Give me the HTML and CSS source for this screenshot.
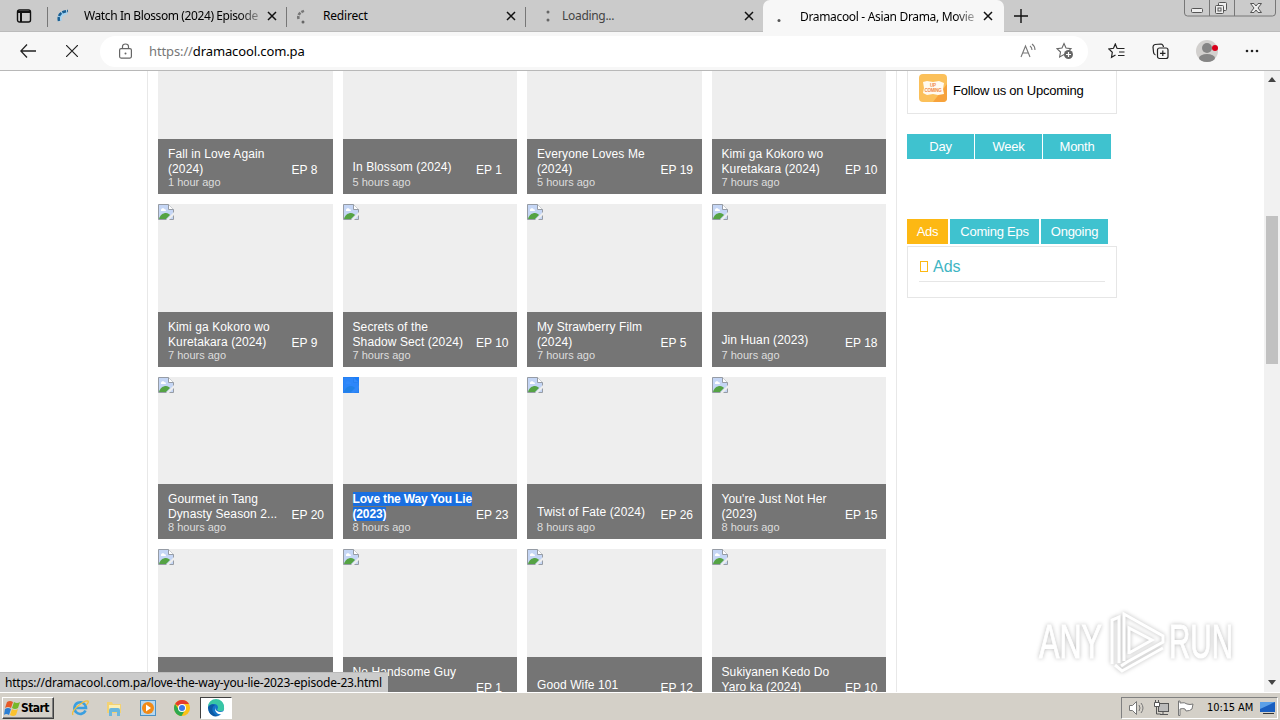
FILE: index.html
```
<!DOCTYPE html>
<html lang="en">
<head>
  <meta charset="UTF-8">
  <title>Dramacool - Asian Drama, Movies</title>
  <link rel="stylesheet" href="styles.css">
</head>
<body>

<!-- shared icons -->
<svg class="defs" width="0" height="0">
  <symbol id="broken" viewBox="0 0 16 16">
    <path d="M.5.5h10l5 5v10H.5z" fill="#c5d6f5" stroke="#969ca5"/>
    <path d="M10.5.5v5h5" fill="#fff" stroke="#969ca5"/>
    <path d="M3 6c0-2 3-2.500 3.500-.8C8 5 8.500 6.500 7.500 7H3z" fill="#fff"/>
    <path d="M1 15c1-4 4-6 7-6 2 0 3 1 4 2l-4 4z" fill="#55a344"/>
    <path d="M8 16l8-8v3l-5 5z" fill="#eee"/>
  </symbol>
  <symbol id="close" viewBox="0 0 10 10"><path d="M1 1l8 8M9 1L1 9" stroke="#111" stroke-width="1.5"/></symbol>
</svg>

<div class="tabs">
  <div class="tab-menu">
    <svg width="16" height="16" viewBox="0 0 16 16"><rect x="1.500" y="2" width="13" height="12" rx="2" fill="none" stroke="#111" stroke-width="1.400"/><path d="M1.500 4h13M5 3v11" stroke="#111" stroke-width="2"/></svg>
  </div>
  <div class="tab first">
    <svg class="spin" width="16" height="16" viewBox="0 0 16 16"><path d="M6 13Q4 6 13 4" fill="none" stroke="#a6d3f0" stroke-width="4"/><path d="M5 13Q3 4 14 3" fill="none" stroke="#1a5f92" stroke-width="2.500" stroke-dasharray="4 1"/></svg>
    <span class="tab-name fade">Watch In Blossom (2024) Episode</span>
    <svg class="x" width="10" height="10"><use href="#close"/></svg>
  </div>
  <div class="tab second">
    <svg class="spin" width="16" height="16" viewBox="0 0 16 16"><path d="M3.500 11Q2 5 10 2.500" fill="none" stroke="#777" stroke-width="2.600" stroke-dasharray="3 1"/><circle cx="8" cy="14" r="1.500" fill="#666"/></svg>
    <span class="tab-name">Redirect</span>
    <svg class="x" width="10" height="10"><use href="#close"/></svg>
  </div>
  <div class="tab third">
    <svg class="spin" width="16" height="16" viewBox="0 0 16 16"><circle cx="10" cy="4" r="1.500" fill="#666"/><circle cx="10" cy="12" r="1.500" fill="#666"/></svg>
    <span class="tab-name grey">Loading...</span>
    <svg class="x" width="10" height="10"><use href="#close"/></svg>
  </div>
  <div class="tab active">
    <svg class="spin" width="16" height="16" viewBox="0 0 16 16"><circle cx="4" cy="12.500" r="1.500" fill="#555"/></svg>
    <span class="tab-name fade">Dramacool - Asian Drama, Movie</span>
    <svg class="x" width="10" height="10"><use href="#close"/></svg>
  </div>
  <svg class="plus" width="14" height="14" viewBox="0 0 14 14"><path d="M7 0v14M0 7h14" stroke="#111" stroke-width="1.400"/></svg>
  <div class="win-buttons">
    <svg width="92" height="17" viewBox="0 0 92 17" fill="none" stroke="#777">
      <path d="M.5 0v13q0 3 3 3h85q3 0 3-3V0M25.500 0v16M50.500 0v16"/>
      <g stroke="#555" fill="#eee">
        <rect x="7.500" y="8.500" width="11" height="4" rx="1"/>
        <rect x="34.500" y="2.500" width="8" height="8" rx="1"/><rect x="31.500" y="5.500" width="8" height="8" rx="1"/><rect x="34" y="8" width="3" height="3"/>
        <path d="M66.500 3.500h3.500l2 2.500 2-2.500h3.500l-3.500 4.500 3.500 4.500H74l-2-2.500-2 2.500h-3.500L70 8z"/>
      </g>
    </svg>
  </div>
</div>

<div class="toolbar">
  <svg class="back" width="16" height="14" viewBox="0 0 16 14"><path d="M7 .5L.8 7 7 13.500M1 7h15" fill="none" stroke="#222" stroke-width="1.300"/></svg>
  <svg class="stop" width="12" height="12" viewBox="0 0 12 12"><path d="M0 0l12 12M12 0L0 12" stroke="#222" stroke-width="1.200"/></svg>
  <div class="address">
    <svg class="lock" width="13" height="16" viewBox="0 0 13 16" fill="none" stroke="#666" stroke-width="1.200"><rect x=".6" y="5.600" width="11.800" height="9.500" rx="1.500"/><path d="M3.500 5.500V3.500Q3.500 1 6.500 1t3 2.500v2"/><circle cx="6.500" cy="10.500" r="1" fill="#666" stroke="none"/></svg>
    <span class="url"><i>https://</i>dramacool.com.pa</span>
    <svg class="read" width="16" height="16" viewBox="0 0 16 16" fill="none" stroke="#777" stroke-width="1.100"><path d="M1 14L5.500 3 10 14M2.500 10h6M10 3q2 1.500 2 4M12 1q3 2 3 6"/></svg>
    <svg class="fav" width="18" height="18" viewBox="0 0 18 18"><path d="M8 1.500l2 4.500 5 .6-3.700 3.400 1 5L8 12.600 3.600 15l.9-5L1 6.600 6 6z" fill="none" stroke="#666" stroke-width="1.100"/><circle cx="12.500" cy="12.500" r="4.500" fill="#666"/><path d="M12.500 10v5M10 12.500h5" stroke="#fff" stroke-width="1.200"/></svg>
  </div>
  <div class="tools">
    <svg width="17" height="16" viewBox="0 0 17 16" fill="none" stroke="#222" stroke-width="1.200"><path d="M10 5.500L9 5.300 7.300 1 5.500 5.300.8 6l3.500 3.300-.8 5L7.500 12M9 5.500h7.500M11 9h5.500M10 12.500h6.500"/></svg>
    <svg width="17" height="17" viewBox="0 0 17 17" fill="none" stroke="#222" stroke-width="1.200"><path d="M3.500 12Q1.500 11.500 1.500 9L1 4q0-2 2-2.500L9 1q2 0 2.500 3"/><rect x="5.500" y="5" width="10.500" height="10.500" rx="2"/><path d="M10.800 7.500v5.500M8 10.300h5.500"/></svg>
    <svg class="avatar" width="24" height="22" viewBox="0 0 24 22"><circle cx="11" cy="11" r="11" fill="#d2d0ce"/><circle cx="11" cy="8" r="5" fill="#858585"/><ellipse cx="11" cy="18" rx="8" ry="4" fill="#858585"/><circle cx="19" cy="8" r="3" fill="#d9001b"/></svg>
    <svg width="14" height="4" viewBox="0 0 14 4" fill="#222"><circle cx="2" cy="2" r="1.300"/><circle cx="7" cy="2" r="1.300"/><circle cx="12" cy="2" r="1.300"/></svg>
  </div>
</div>

<div class="viewport">
  <div class="page">
    <div class="left">
      <ul class="list">
        <li><div class="info two"><h3>Fall in Love Again (2024)</h3><span class="time">1 hour ago</span><span class="ep">EP 8</span></div></li>
        <li><div class="info"><h3>In Blossom (2024)</h3><span class="time">5 hours ago</span><span class="ep">EP 1</span></div></li>
        <li><div class="info two"><h3>Everyone Loves Me (2024)</h3><span class="time">5 hours ago</span><span class="ep">EP 19</span></div></li>
        <li><div class="info two"><h3>Kimi ga Kokoro wo Kuretakara (2024)</h3><span class="time">7 hours ago</span><span class="ep">EP 10</span></div></li>

        <li><svg class="img"><use href="#broken"/></svg><div class="info two"><h3>Kimi ga Kokoro wo Kuretakara (2024)</h3><span class="time">7 hours ago</span><span class="ep">EP 9</span></div></li>
        <li><svg class="img"><use href="#broken"/></svg><div class="info two"><h3>Secrets of the<br>Shadow Sect (2024)</h3><span class="time">7 hours ago</span><span class="ep">EP 10</span></div></li>
        <li><svg class="img"><use href="#broken"/></svg><div class="info two"><h3>My Strawberry Film (2024)</h3><span class="time">7 hours ago</span><span class="ep">EP 5</span></div></li>
        <li><svg class="img"><use href="#broken"/></svg><div class="info"><h3>Jin Huan (2023)</h3><span class="time">7 hours ago</span><span class="ep">EP 18</span></div></li>

        <li><svg class="img"><use href="#broken"/></svg><div class="info two"><h3>Gourmet in Tang<br>Dynasty Season 2...</h3><span class="time">8 hours ago</span><span class="ep">EP 20</span></div></li>
        <li class="selected"><svg class="img"><use href="#broken"/></svg><div class="info two"><h3><mark>Love the Way You Lie<br>(2023)</mark></h3><span class="time">8 hours ago</span><span class="ep">EP 23</span></div></li>
        <li><svg class="img"><use href="#broken"/></svg><div class="info"><h3>Twist of Fate (2024)</h3><span class="time">8 hours ago</span><span class="ep">EP 26</span></div></li>
        <li><svg class="img"><use href="#broken"/></svg><div class="info two"><h3>You're Just Not Her (2023)</h3><span class="time">8 hours ago</span><span class="ep">EP 15</span></div></li>

        <li><svg class="img"><use href="#broken"/></svg><div class="info"></div></li>
        <li><svg class="img"><use href="#broken"/></svg><div class="info two"><h3>No Handsome Guy<br>&nbsp;</h3><span class="ep">EP 1</span></div></li>
        <li><svg class="img"><use href="#broken"/></svg><div class="info"><h3>Good Wife 101</h3><span class="ep">EP 12</span></div></li>
        <li><svg class="img"><use href="#broken"/></svg><div class="info two"><h3>Sukiyanen Kedo Do Yaro ka (2024)</h3><span class="ep">EP 10</span></div></li>
      </ul>
    </div>

    <div class="right">
      <div class="follow">
        <svg width="28" height="28" viewBox="0 0 28 28"><rect width="28" height="28" rx="4" fill="#fbc05a"/><path d="M14 28h10q4 0 4-4V10z" fill="#f7a23b"/><path d="M4 8l4-1 6 1 6-1 5 2-1 6 1 5-6 1-5-1-6 1-4-2 1-5z" fill="#fffaf0"/><text x="14" y="13" class="logo-text">UP</text><text x="14" y="18" class="logo-text">COMING</text></svg>
        <span>Follow us on Upcoming</span>
      </div>
      <div class="range"><a>Day</a><a>Week</a><a>Month</a></div>
      <div class="sub-tabs"><a class="on">Ads</a><a>Coming Eps</a><a>Ongoing</a></div>
      <div class="ads"><h4><i class="glyph"></i>Ads</h4></div>
    </div>
  </div>

  <div class="scrollbar">
    <svg class="up" width="8" height="5"><path d="M0 5l4-5 4 5z" fill="#444"/></svg>
    <div class="thumb"></div>
    <svg class="down" width="8" height="5"><path d="M0 0l4 5 4-5z" fill="#444"/></svg>
  </div>

  <div class="status">https://dramacool.com.pa/love-the-way-you-lie-2023-episode-23.html</div>

  <svg class="watermark" width="210" height="76" viewBox="0 0 210 76">
    <g class="wm-text"><text x="9" y="55" textLength="63" lengthAdjust="spacingAndGlyphs">ANY</text><text x="139" y="55" textLength="64" lengthAdjust="spacingAndGlyphs">RUN</text></g>
    <g class="wm-play"><path d="M94 58V11l39 22v6L97 59l-6 4M82 61V17l7-3v46M85 62l7 6 41-23M99 51V25l23 12-23 13"/></g>
  </svg>
</div>

<div class="taskbar">
  <div class="start">
    <svg width="16" height="16" viewBox="0 0 16 16"><path d="M3 2q3-2 6 0L7 8Q4 6 1 8z" fill="#e65a28"/><path d="M10 2q3 2 6 0l-2 6q-3 2-6 0z" fill="#76b82a"/><path d="M1 9q3-2 6 0l-2 6q-3-2-5 0z" fill="#2d7fd3"/><path d="M8 9q3 2 6 0l-2 6q-3 2-6 0z" fill="#fbc22d"/></svg>
    <b>Start</b>
  </div>
  <div class="quick">
    <svg width="18" height="18" viewBox="0 0 18 18"><path d="M14.500 11.500A5.800 5.800 0 1 1 15 9H5" fill="none" stroke="#3b9fe0" stroke-width="2.600"/><path d="M2 16q-2-3 5-9t10-5q1 2-2 4" fill="none" stroke="#f2bf3a" stroke-width="1.300"/></svg>
    <svg width="18" height="18" viewBox="0 0 18 18"><path d="M2 3h5l1 2h8v9H2z" fill="#f3d273"/><path d="M4 6h11v5H4z" fill="#fbefb5"/><path d="M4 17v-6q0-2 2-2h7q2 0 2 2v6h-3v-4H7v4z" fill="#6bb7dd"/></svg>
    <svg width="18" height="18" viewBox="0 0 18 18"><rect x="1.500" y="1.500" width="15" height="15" fill="#b7d8f0" stroke="#4b91c5"/><circle cx="9" cy="9" r="6" fill="#f28a16"/><path d="M7 5.500l5 3.500-5 3.500z" fill="#fff"/></svg>
    <svg width="18" height="18" viewBox="0 0 18 18"><circle cx="9" cy="9" r="8" fill="#fbc116"/><path d="M9 9L2.100 5A8 8 0 0 1 16 5H9z" fill="#e33b2e"/><path d="M2.100 5A8 8 0 0 0 8.500 17l3.500-6H6z" fill="#2da94f"/><circle cx="9" cy="9" r="4" fill="#fff"/><circle cx="9" cy="9" r="3" fill="#3b78e7"/></svg>
  </div>
  <div class="task-edge">
    <svg width="18" height="18" viewBox="0 0 18 18"><circle cx="9" cy="9" r="8" fill="#1374c8"/><path d="M1 8a8 8 0 0 1 16 0q1 5-5 4-3-1-1-3 0-4-4-4-4 0-6 3z" fill="#38c6a5"/><path d="M1 8q3-4 7-2-4 2-2 7 3 5 8 3Q6 20 2 13z" fill="#0c59a4"/><path d="M9 7q-2 3 1 5t7 0l-2 3q-4 1-6-2t0-6z" fill="#fff"/></svg>
  </div>
  <div class="tray">
    <svg width="18" height="16" viewBox="0 0 18 16" fill="none" stroke="#777"><path d="M1.500 5.500h3l4-4v13l-4-4h-3z" fill="#fff"/><path d="M11 5q2 3 0 6M13 3q4 5 0 10"/></svg>
    <svg width="17" height="16" viewBox="0 0 17 16" fill="none" stroke="#555"><rect x="5.500" y="3.500" width="10" height="8" fill="#bbb"/><path d="M7 14.500h8M10 12v2M3.500 7v7h4" /><path d="M1.500 2.500h5v4h-5zM2.500 0v2M5.500 0v2" fill="#fff"/></svg>
    <svg width="17" height="16" viewBox="0 0 17 16" fill="#fff" stroke="#777"><path d="M1.500 1v14.500h1.500V9q3-1 5 0l1 2q4 0 6-2l1-5q-3 1-6 0-2-2-7-1V1z"/></svg>
    <span>10:15 AM</span>
    <svg width="16" height="14" viewBox="0 0 16 14"><path d="M0 1h15v10H0z" fill="#1a5fc0"/><path d="M0 1h15L0 8z" fill="#5ba0e8"/><path d="M3 12h11v1H3z" fill="#333"/></svg>
  </div>
</div>

</body>
</html>
```
FILE: styles.css
```
* { box-sizing: border-box; }

body {
  margin: 0;
  width: 1280px;
  height: 720px;
  overflow: hidden;
  display: flex;
  flex-direction: column;
  font-family: "Liberation Sans", Arial, sans-serif;
  font-size: 12px;
  background: #fff;
  color: #000;
}

svg { display: block; flex: none; }
.defs { position: absolute; }

/* BROWSER TABS */
.tabs {
  height: 32px;
  flex: none;
  display: flex;
  background: #cbcbcb;
  border-bottom: 1px solid #bbb;
  font-family: "Noto Sans", "Open Sans", sans-serif;
}

.tab-menu {
  width: 47px;
  padding: 8px 0 0 16px;
}

.tab {
  position: relative;
  display: flex;
  align-items: center;
  width: 239px;
  padding-left: 7px;
}

.tab::before {
  content: "";
  width: 1px;
  height: 20px;
  background: #777;
  position: absolute;
  left: 0;
  top: 7px;
}

.tab.second { padding-left: 9px; }
.tab.third { width: 238px; padding-left: 13px; }

.tab.active {
  width: 241px;
  height: 32px;
  background: #f7f7f7;
  border-radius: 7px 7px 0 0;
  padding-left: 12px;
}

.tab.active::before { display: none; }

.tab-name {
  width: 176px;
  margin-left: 14px;
  margin-right: 7px;
  white-space: nowrap;
  letter-spacing: -0.4px;
}

.tab.second .tab-name { margin-left: 12px; letter-spacing: -0.2px; }
.tab.third .tab-name { margin-left: 8px; margin-right: 6px; letter-spacing: -0.3px; }
.tab.active .tab-name { margin-left: 9px; letter-spacing: -0.33px; }
.grey { color: #444; }

.fade {
  -webkit-mask-image: linear-gradient(to right, #000 88%, rgba(0,0,0,0.25));
  mask-image: linear-gradient(to right, #000 88%, rgba(0,0,0,0.25));
}

.plus { margin: 9px 0 0 10px; }
.win-buttons { margin-left: auto; padding-right: 4px; }

/* TOOLBAR */
.toolbar {
  height: 39px;
  flex: none;
  display: flex;
  align-items: center;
  background: #f7f7f7;
  border-bottom: 1px solid #b8b8b8;
  padding-left: 20px;
}

.stop { margin-left: 30px; }

.address {
  width: 988px;
  height: 31px;
  margin-left: 22px;
  border-radius: 16px;
  background: #fff;
  display: flex;
  align-items: center;
  padding: 0 14px 0 19px;
}

.url {
  margin-left: 17px;
  font-family: "Noto Sans", "Open Sans", sans-serif;
  font-size: 13px;
  letter-spacing: -0.12px;
}

.url i { font-style: normal; color: #777; }
.read { margin-left: auto; }
.fav { margin-left: 20px; }

.tools {
  display: flex;
  align-items: center;
  gap: 27px;
  margin-left: 20px;
}

.tools .avatar { margin-right: -2px; }

/* PAGE */
.viewport {
  position: relative;
  height: 621px;
  flex: none;
  overflow: hidden;
  display: flex;
  justify-content: space-between;
}

.page {
  display: flex;
  margin-left: 147px;
}

.left {
  width: 750px;
  border-left: 1px solid #e8e8e8;
  border-right: 1px solid #e8e8e8;
  padding: 0 10px;
}

.list {
  list-style: none;
  margin: -39.3px 0 0;
  padding: 0;
  display: grid;
  grid-template-columns: repeat(4, minmax(0, 1fr));
  gap: 10px;
}

.list li {
  height: 162.5px;
  background: #eee;
  display: flex;
  flex-direction: column;
}

.img { width: 16px; height: 16px; }

.info {
  height: 55px;
  margin-top: auto;
  background: #757575;
  color: #fff;
  padding: 20px 0 0 10px;
  display: grid;
  grid-template-columns: 124px 1fr;
  grid-template-rows: 17px 13px;
  align-content: start;
}

.info.two {
  padding-top: 7px;
  grid-template-rows: 30px 13px;
}

.info h3 {
  margin: 0;
  padding: 1px 10px 0 0;
  font-size: 12px;
  font-weight: normal;
  line-height: 15px;
  letter-spacing: 0.1px;
}

.selected .info h3 {
  padding-right: 0;
  white-space: nowrap;
  letter-spacing: -0.15px;
}

.time {
  grid-row: 2;
  font-size: 11px;
  line-height: 13px;
  color: #ddd;
}

.ep {
  grid-column: 2;
  grid-row: 1;
  align-self: end;
  line-height: 15px;
  margin-bottom: -2px;
  margin-left: -0.5px;
  white-space: nowrap;
}

.selected .img { background: #1a7dfa; }
.selected .img use { opacity: 0.1; }

mark {
  background: #1a6fe0;
  color: #fff;
  font-weight: bold;
}

/* SIDEBAR */
.right {
  width: 210px;
  margin-left: 10px;
}

.follow {
  height: 43px;
  border: 1px solid #e6e6e6;
  border-top: none;
  display: flex;
  align-items: center;
  gap: 6px;
  padding: 0 0 8px 11px;
  font-size: 13px;
  letter-spacing: -0.22px;
}

.follow span { padding-top: 4px; }

.logo-text {
  font-size: 4.5px;
  font-weight: bold;
  fill: #f08a4b;
  text-anchor: middle;
}

.right a {
  background: #3fc2cf;
  color: #fff;
  height: 25px;
  line-height: 26px;
  text-align: center;
  font-size: 13px;
  letter-spacing: -0.25px;
}

.range {
  display: flex;
  gap: 1px;
  margin-top: 20px;
}

.range a { width: 67px; }
.range a:last-child { width: 68px; }

.sub-tabs {
  display: flex;
  gap: 2px;
  margin-top: 60px;
}

.sub-tabs a { width: 67px; }
.sub-tabs a:nth-child(2) { width: 89px; }
.sub-tabs .on { width: 41px; background: #fdb813; }

.ads {
  height: 52px;
  margin-top: 2px;
  border: 1px solid #e6e6e6;
  padding: 9px 11px;
}

.ads h4 {
  margin: 0;
  height: 26px;
  border-bottom: 1px solid #e6e6e6;
  font-size: 16px;
  font-weight: normal;
  line-height: 21px;
  color: #3fb5c3;
  display: flex;
  align-items: center;
  padding-bottom: 4px;
}

.glyph {
  width: 8px;
  height: 11px;
  border: 1px solid #fdb813;
  margin: 0 5px 0 1px;
}

/* SCROLLBAR */
.scrollbar {
  width: 16px;
  background: #f1f1f1;
  display: flex;
  flex-direction: column;
  align-items: center;
}

.up { margin-top: 6px; }
.thumb { width: 12px; height: 148px; margin-top: 134px; background: #c1c1c1; }
.down { margin: auto 0 7px; }

/* overlays */
.status {
  position: absolute;
  left: 0;
  bottom: 0;
  width: 388px;
  height: 20px;
  padding-left: 5px;
  background: #cbcbcb;
  border-top: 1px solid #bbb;
  font-family: "Noto Sans", "Open Sans", sans-serif;
  line-height: 19px;
  letter-spacing: -0.2px;
  white-space: nowrap;
}

.watermark {
  position: absolute;
  left: 1030px;
  top: 532px;
  filter: drop-shadow(0 0 2px #bbb);
}

.wm-text {
  font-family: "Liberation Sans", Arial, sans-serif;
  font-size: 48px;
  fill: #fff;
  stroke: #fff;
}

.wm-play {
  fill: none;
  stroke: #fff;
  stroke-width: 3;
}

/* TASKBAR */
.taskbar {
  height: 28px;
  flex: none;
  display: flex;
  align-items: center;
  background: #d4d0c8;
  border-top: 1px solid #fff;
  padding: 2px 2px 0;
  font-family: "DejaVu Sans Condensed", "DejaVu Sans", sans-serif;
  font-size: 11px;
}

.start {
  width: 52px;
  height: 22px;
  display: flex;
  align-items: center;
  gap: 1px;
  padding-left: 1px;
  border: 1px solid;
  border-color: #fff #404040 #404040 #fff;
  box-shadow: inset -1px -1px #808080;
}

.start b { font-size: 12px; letter-spacing: -0.6px; }

.quick {
  display: flex;
  gap: 16px;
  margin-left: 17px;
}

.task-edge {
  width: 32px;
  height: 22px;
  margin-left: 9px;
  background: #fff;
  border: 1px solid;
  border-color: #404040 #fff #fff #404040;
  display: flex;
  align-items: center;
  justify-content: center;
}

.tray {
  width: 157px;
  height: 22px;
  margin-left: auto;
  border: 1px solid;
  border-color: #808080 #fff #fff #808080;
  display: flex;
  align-items: center;
  gap: 7px;
  padding-left: 6px;
}

.tray span {
  margin-left: 6px;
  white-space: nowrap;
  letter-spacing: -0.1px;
}
```
